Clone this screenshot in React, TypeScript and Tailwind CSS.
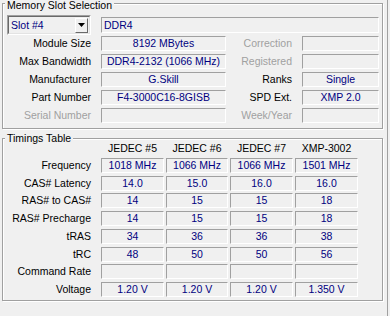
import React from "react";

function Field({
  children,
  className = "",
  left = false,
}: {
  children?: React.ReactNode;
  className?: string;
  left?: boolean;
}) {
  return (
    <div
      className={
        "flex h-[15px] shrink-0 items-center whitespace-nowrap border border-b-white border-l-[#a0a0a0] border-r-white border-t-[#a0a0a0] leading-none text-[#000080] " +
        (left ? "justify-start pl-[2px] " : "justify-center ") +
        className
      }
    >
      {children}
    </div>
  );
}

function Label({
  children,
  className = "",
  disabled = false,
}: {
  children: React.ReactNode;
  className?: string;
  disabled?: boolean;
}) {
  return (
    <div
      className={
        "shrink-0 whitespace-nowrap text-right leading-none " +
        (disabled ? "text-[#a0a0a0] " : "text-black ") +
        className
      }
    >
      {children}
    </div>
  );
}

function Group({
  title,
  className = "",
  titleClass = "",
  children,
}: {
  title: string;
  className?: string;
  titleClass?: string;
  children: React.ReactNode;
}) {
  return (
    <div
      className={
        "relative w-[381px] border border-[#a0a0a0] shadow-[inset_1px_1px_0_#ffffff,1px_1px_0_#ffffff] " +
        className
      }
    >
      <span
        className={
          "absolute left-[2px] -translate-y-1/2 bg-[#f0f0f0] px-[2px] leading-[12px] text-black " +
          titleClass
        }
      >
        {title}
      </span>
      {children}
    </div>
  );
}

const topRows = [
  { l: "Module Size", v: "8192 MBytes", rl: "Correction", rv: "", rd: true },
  { l: "Max Bandwidth", v: "DDR4-2132 (1066 MHz)", rl: "Registered", rv: "", rd: true },
  { l: "Manufacturer", v: "G.Skill", rl: "Ranks", rv: "Single", rd: false },
  { l: "Part Number", v: "F4-3000C16-8GISB", rl: "SPD Ext.", rv: "XMP 2.0", rd: false },
  { l: "Serial Number", v: "", rl: "Week/Year", rv: "", rd: true, ld: true },
];

const timings = [
  { l: "Frequency", v: ["1018 MHz", "1066 MHz", "1066 MHz", "1501 MHz"], mt: "mt-[2px]" },
  { l: "CAS# Latency", v: ["14.0", "15.0", "16.0", "16.0"], mt: "mt-[3px]" },
  { l: "RAS# to CAS#", v: ["14", "15", "15", "18"], mt: "mt-[2px]" },
  { l: "RAS# Precharge", v: ["14", "15", "15", "18"], mt: "mt-[3px]" },
  { l: "tRAS", v: ["34", "36", "36", "38"], mt: "mt-[3px]" },
  { l: "tRC", v: ["48", "50", "50", "56"], mt: "mt-[3px]" },
  { l: "Command Rate", v: ["", "", "", ""], mt: "mt-[2px]" },
  { l: "Voltage", v: ["1.20 V", "1.20 V", "1.20 V", "1.350 V"], mt: "mt-[3px]" },
];

const colW = ["w-[63px]", "w-[62px]", "w-[63px]", "w-[63px]"];
const headers = ["JEDEC #5", "JEDEC #6", "JEDEC #7", "XMP-3002"];

export default function App() {
  return (
    <div className="relative h-[316px] w-[390px] overflow-hidden bg-[#f0f0f0] pl-[2px] pt-[3px] font-['Liberation_Sans',Arial,sans-serif] text-[10.5px]">
      <div className="absolute right-[2px] top-0 h-full w-px bg-[#a0a0a0]" />

      <Group title="Memory Slot Selection" className="h-[126px]" titleClass="top-[1px]">
        <div className="flex flex-col pl-[4px] pt-[11px]">
          <div className="flex h-[20px] items-center">
            <div className="flex h-[20px] w-[84px] shrink-0 border border-b-white border-l-[#a0a0a0] border-r-white border-t-[#a0a0a0]">
              <div className="flex flex-1 items-center border border-b-[#e3e3e3] border-l-[#696969] border-r-[#e3e3e3] border-t-[#696969] bg-[#f0f0f0]">
                <span className="flex-1 pl-[2px] leading-none text-[#000080]">Slot #4</span>
                <div className="mr-px flex h-[15px] w-[13px] items-center justify-center border border-b-[#696969] border-l-white border-r-[#696969] border-t-white bg-[#f0f0f0]">
                  <svg width="7" height="4" viewBox="0 0 7 4">
                    <polygon points="0,0 7,0 3.5,4" fill="#000" />
                  </svg>
                </div>
              </div>
            </div>
            <Field left className="ml-[10px] h-[16px] w-[278px]">
              DDR4
            </Field>
          </div>
          {topRows.map((r, i) => (
            <div key={r.l} className={"flex items-center " + (i === 0 ? "mt-px" : "mt-[3px]")}>
              <Label className="w-[84px]" disabled={!!r.ld}>
                {r.l}
              </Label>
              <Field className="ml-[10px] w-[125px]">{r.v}</Field>
              <Label className="w-[66px]" disabled={r.rd}>
                {r.rl}
              </Label>
              <Field className="ml-[10px] w-[77px]">{r.rv}</Field>
            </div>
          ))}
        </div>
      </Group>

      <Group title="Timings Table" className="mt-[9px] h-[163px]" titleClass="top-[-1px]">
        <div className="flex flex-col pl-[4px] pt-[2px]">
          <div className="flex h-[15px] items-center">
            <div className="w-[84px] shrink-0" />
            <div className="ml-[10px] flex gap-x-[2px]">
              {headers.map((h, j) => (
                <div key={h} className={"shrink-0 text-center leading-none text-black " + colW[j]}>
                  {h}
                </div>
              ))}
            </div>
          </div>
          {timings.map((r) => (
            <div key={r.l} className={"flex items-center " + r.mt}>
              <Label className="w-[84px]">{r.l}</Label>
              <div className="ml-[10px] flex gap-x-[2px]">
                {r.v.map((v, j) => (
                  <Field key={j} className={colW[j]}>
                    {v}
                  </Field>
                ))}
              </div>
            </div>
          ))}
        </div>
      </Group>
    </div>
  );
}
